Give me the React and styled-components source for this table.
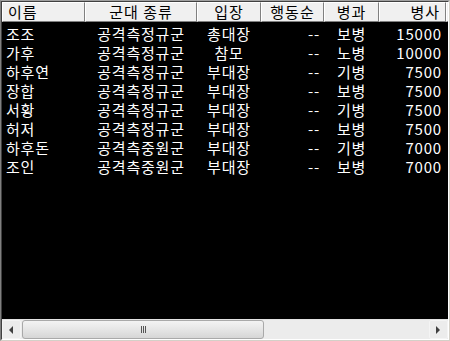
import styled, { createGlobalStyle } from "styled-components";

const GlobalStyle = createGlobalStyle`
  html, body {
    margin: 0;
    padding: 0;
    background: #ffffff;
  }
  body {
    font-family: "Noto Sans CJK KR", "Noto Sans", sans-serif;
  }
`;

const columns = [
  { key: "name", label: "이름", width: 83, head: "left", cell: "left" },
  { key: "type", label: "군대 종류", width: 112, head: "center", cell: "center" },
  { key: "role", label: "입장", width: 64, head: "center", cell: "center" },
  { key: "order", label: "행동순", width: 63, head: "center", cell: "right" },
  { key: "arm", label: "병과", width: 55, head: "center", cell: "center" },
  { key: "troops", label: "병사", width: 67, head: "right", cell: "right" },
];

const rows = [
  { name: "조조", type: "공격측정규군", role: "총대장", order: "--", arm: "보병", troops: "15000" },
  { name: "가후", type: "공격측정규군", role: "참모", order: "--", arm: "노병", troops: "10000" },
  { name: "하후연", type: "공격측정규군", role: "부대장", order: "--", arm: "기병", troops: "7500" },
  { name: "장합", type: "공격측정규군", role: "부대장", order: "--", arm: "보병", troops: "7500" },
  { name: "서황", type: "공격측정규군", role: "부대장", order: "--", arm: "기병", troops: "7500" },
  { name: "허저", type: "공격측정규군", role: "부대장", order: "--", arm: "보병", troops: "7500" },
  { name: "하후돈", type: "공격측중원군", role: "부대장", order: "--", arm: "기병", troops: "7000" },
  { name: "조인", type: "공격측중원군", role: "부대장", order: "--", arm: "보병", troops: "7000" },
];

const Frame = styled.div`
  width: 450px;
  height: 341px;
  box-sizing: border-box;
  border-top: 1px solid #a0a0a0;
  border-left: 1px solid #808080;
  border-right: 1px solid #d4d0c8;
  border-bottom: 1px solid #d4d0c8;
  display: flex;
  flex-direction: column;
  background: #f0f0f0;
`;

const Inner = styled.div`
  flex: 1;
  display: flex;
  flex-direction: column;
  border-top: 1px solid #404040;
  border-left: 1px solid #404040;
  border-right: 1px solid #ffffff;
  border-bottom: 1px solid #ffffff;
  min-height: 0;
`;

const HeaderRow = styled.div`
  display: flex;
  height: 20px;
  background: #f0f0f0;
  flex-shrink: 0;
`;

const HeaderCell = styled.div`
  width: ${(p) => p.$w}px;
  flex-shrink: 0;
  box-sizing: border-box;
  height: 20px;
  border-top: 1px solid #ffffff;
  border-left: 1px solid #ffffff;
  border-right: 1px solid #808080;
  border-bottom: 1px solid #808080;
  box-shadow: 1px 1px 0 #404040;
  font-size: 15px;
  line-height: 18px;
  color: #000000;
  text-align: ${(p) => p.$align};
  padding: 0 ${(p) => (p.$align === "center" ? 0 : 5)}px;
  white-space: nowrap;
  letter-spacing: 1px;
`;

const HeaderFill = styled.div`
  flex: 1;
  border-top: 1px solid #ffffff;
  border-left: 1px solid #ffffff;
  border-bottom: 1px solid #808080;
`;

const Body = styled.div`
  flex: 1;
  background: #000000;
  padding-top: 2px;
`;

const Row = styled.div`
  display: flex;
  height: 19px;
`;

const Cell = styled.div`
  width: ${(p) => p.$w}px;
  flex-shrink: 0;
  box-sizing: border-box;
  color: #ffffff;
  font-size: 15px;
  line-height: 19px;
  text-align: ${(p) => p.$align};
  padding: 0 ${(p) => (p.$align === "center" ? 0 : 4)}px;
  white-space: nowrap;
  letter-spacing: 0.8px;
`;

const ScrollBar = styled.div`
  height: 19px;
  flex-shrink: 0;
  display: flex;
  align-items: stretch;
  background: #ececec;
  border-top: 1px solid #e3e3e3;
`;

const ArrowButton = styled.div`
  width: 19px;
  display: flex;
  align-items: center;
  justify-content: center;
  box-sizing: border-box;
  background: #ececec;
  border: 1px solid #f4f4f4;
  border-radius: 2px;
`;

const Track = styled.div`
  flex: 1;
  display: flex;
  padding: 0 1px;
`;

const Thumb = styled.div`
  width: 242px;
  box-sizing: border-box;
  border: 1px solid #a9a9a9;
  border-radius: 3px;
  background: linear-gradient(#f3f3f3, #e4e4e4 55%, #d6d6d6);
  display: flex;
  align-items: center;
  justify-content: center;
`;

const Grip = styled.div`
  display: flex;
  gap: 1px;
  span {
    width: 1px;
    height: 7px;
    background: #555555;
  }
`;

const Arrow = ({ dir }) => (
  <svg width="5" height="8" viewBox="0 0 5 8">
    {dir === "left" ? (
      <path d="M4 0 L0 4 L4 8 Z" fill="#404040" />
    ) : (
      <path d="M0 0 L4 4 L0 8 Z" fill="#404040" />
    )}
  </svg>
);

export default function App() {
  return (
    <>
      <GlobalStyle />
      <Frame>
        <Inner>
          <HeaderRow>
            {columns.map((c) => (
              <HeaderCell key={c.key} $w={c.width} $align={c.head}>
                {c.label}
              </HeaderCell>
            ))}
            <HeaderFill />
          </HeaderRow>
          <Body>
            {rows.map((r, i) => (
              <Row key={i}>
                {columns.map((c) => (
                  <Cell key={c.key} $w={c.width} $align={c.cell}>
                    {r[c.key]}
                  </Cell>
                ))}
              </Row>
            ))}
          </Body>
          <ScrollBar>
            <ArrowButton>
              <Arrow dir="left" />
            </ArrowButton>
            <Track>
              <Thumb>
                <Grip>
                  <span />
                  <span />
                  <span />
                </Grip>
              </Thumb>
            </Track>
            <ArrowButton>
              <Arrow dir="right" />
            </ArrowButton>
          </ScrollBar>
        </Inner>
      </Frame>
    </>
  );
}
